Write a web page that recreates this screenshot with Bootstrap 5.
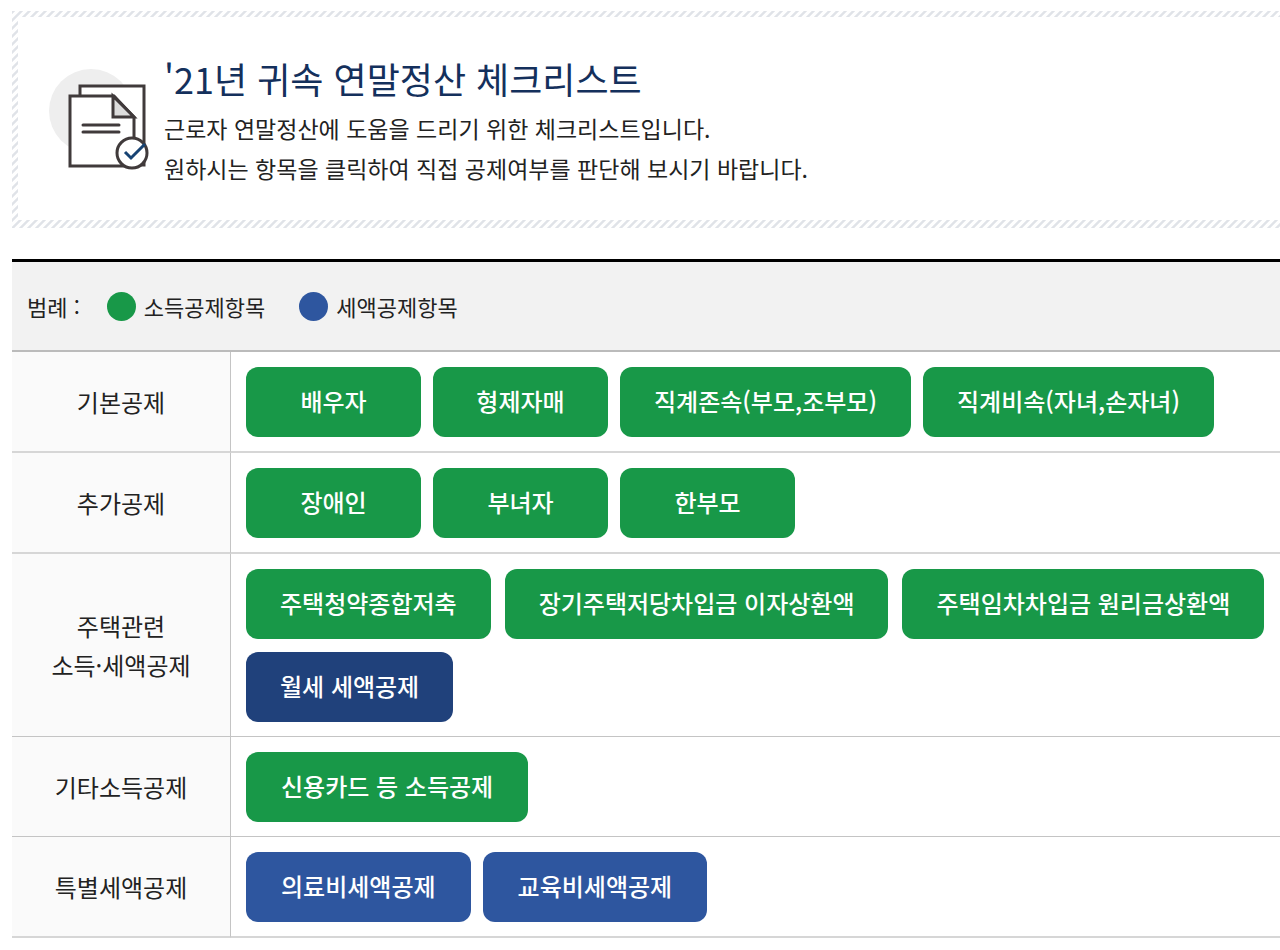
<!DOCTYPE html>
<html lang="ko">
<head>
<meta charset="utf-8">
<meta name="viewport" content="width=device-width, initial-scale=1">
<title>'21년 귀속 연말정산 체크리스트</title>
<link href="https://cdn.jsdelivr.net/npm/bootstrap@5.3.0/dist/css/bootstrap.min.css" rel="stylesheet">
<style>
  body { font-family: "Noto Sans CJK KR", sans-serif; font-size: 24px; color: #222; background: #fff; padding: 11px 0 12px 12px; }
  .hatched { background: linear-gradient(135deg, #e0e3e8 0 16%, #fff 25% 45%, #e0e3e8 52% 66%, #fff 75% 95%, #e0e3e8 100%) 0 0 / 8px 8px; padding: 6px 0 8px 6px; margin-bottom: 31px; }
  .intro { padding: 36px 24px 32px 31px; gap: 15px; }
  .intro-icon { width: 100px; height: 101px; margin-top: 16px; }
  .intro h1 { font-size: 36px; line-height: 50px; font-weight: 400; color: #14305c; margin-bottom: 5px; }
  .intro p { font-size: 23px; line-height: 40px; }
  .legend-bar { border-top: 3px solid #000; border-bottom: 2px solid #bbb; background: #f2f2f2; font-size: 22px; line-height: 88px; padding-left: 15px; gap: 34px; }
  .legend-title { margin-right: -7px; }
  .dot { width: 29px; height: 29px; border-radius: 50%; margin-right: 8px; }
  .income { background: #189848; }
  .credit { background: #2e569f; }
  .checks { border-collapse: separate; border-spacing: 0; }
  .checks th { width: 219px; background: #fafafa; border-right: 1px solid #c4c4c4; font-weight: 400; line-height: 39px; padding-bottom: 2px; text-align: center; vertical-align: middle; }
  .checks td { padding: 15px 0 14px 15px; }
  .checks th, .checks td { border-bottom: 2px solid #d6d6d6; }
  .checks .thin th, .checks .thin td { border-bottom: 1px solid #c4c4c4; }
  .items { gap: 12px; }
  .items-wide { gap: 13px 14px; }
  .items .btn { min-width: 175px; height: 70px; padding: 0 35px 2px; border: 0; border-radius: 12px; font-size: 24px; font-weight: 500; line-height: 68px; color: #fff; }
  .items-full .btn { padding: 0 34px 2px; }
  .items .btn:hover, .items .current { background: #20417b; }
</style>
</head>
<body>
<header class="hatched">
  <div class="intro bg-white d-flex align-items-start">
    <svg class="intro-icon flex-shrink-0" viewBox="0 0 100 101" fill="none" aria-hidden="true">
      <circle cx="42" cy="42" r="42" fill="#eee"/>
      <path d="M31 17H95V96H31z" fill="#fff" stroke="#403a3b" stroke-width="3"/>
      <path d="M21 27H65L85 48V97H21z" fill="#fff" stroke="#403a3b" stroke-width="3"/>
      <path d="M64 27V48H85z" fill="#ddd" stroke="#403a3b" stroke-width="3"/>
      <path d="M34 56H70M34 63H70" stroke="#403a3b" stroke-width="3" stroke-linecap="round"/>
      <circle cx="83" cy="84" r="15" fill="#fff" stroke="#403a3b" stroke-width="3"/>
      <path d="M76 83L82 89L96 75" stroke="#174373" stroke-width="3"/>
    </svg>
    <div>
      <h1>'21년 귀속 연말정산 체크리스트</h1>
      <p class="mb-0">근로자 연말정산에 도움을 드리기 위한 체크리스트입니다.<br>원하시는 항목을 클릭하여 직접 공제여부를 판단해 보시기 바랍니다.</p>
    </div>
  </div>
</header>
<main>
  <div class="legend-bar d-flex align-items-center">
    <span class="legend-title">범례 :</span>
    <span class="d-flex align-items-center"><span class="dot income"></span>소득공제항목</span>
    <span class="d-flex align-items-center"><span class="dot credit"></span>세액공제항목</span>
  </div>
  <table class="checks w-100">
    <tbody>
      <tr>
        <th scope="row">기본공제</th>
        <td><div class="items items-full d-flex flex-wrap">
          <button type="button" class="btn income">배우자</button>
          <button type="button" class="btn income">형제자매</button>
          <button type="button" class="btn income">직계존속(부모,조부모)</button>
          <button type="button" class="btn income">직계비속(자녀,손자녀)</button>
        </div></td>
      </tr>
      <tr>
        <th scope="row">추가공제</th>
        <td><div class="items d-flex flex-wrap">
          <button type="button" class="btn income">장애인</button>
          <button type="button" class="btn income">부녀자</button>
          <button type="button" class="btn income">한부모</button>
        </div></td>
      </tr>
      <tr class="thin">
        <th scope="row">주택관련<br>소득·세액공제</th>
        <td><div class="items items-full items-wide d-flex flex-wrap">
          <button type="button" class="btn income">주택청약종합저축</button>
          <button type="button" class="btn income">장기주택저당차입금 이자상환액</button>
          <button type="button" class="btn income">주택임차차입금 원리금상환액</button>
          <button type="button" class="btn current">월세 세액공제</button>
        </div></td>
      </tr>
      <tr class="thin">
        <th scope="row">기타소득공제</th>
        <td><div class="items d-flex flex-wrap">
          <button type="button" class="btn income">신용카드 등 소득공제</button>
        </div></td>
      </tr>
      <tr>
        <th scope="row">특별세액공제</th>
        <td><div class="items d-flex flex-wrap">
          <button type="button" class="btn credit">의료비세액공제</button>
          <button type="button" class="btn credit">교육비세액공제</button>
        </div></td>
      </tr>
    </tbody>
  </table>
</main>
<script src="https://cdn.jsdelivr.net/npm/bootstrap@5.3.0/dist/js/bootstrap.bundle.min.js"></script>
</body>
</html>
